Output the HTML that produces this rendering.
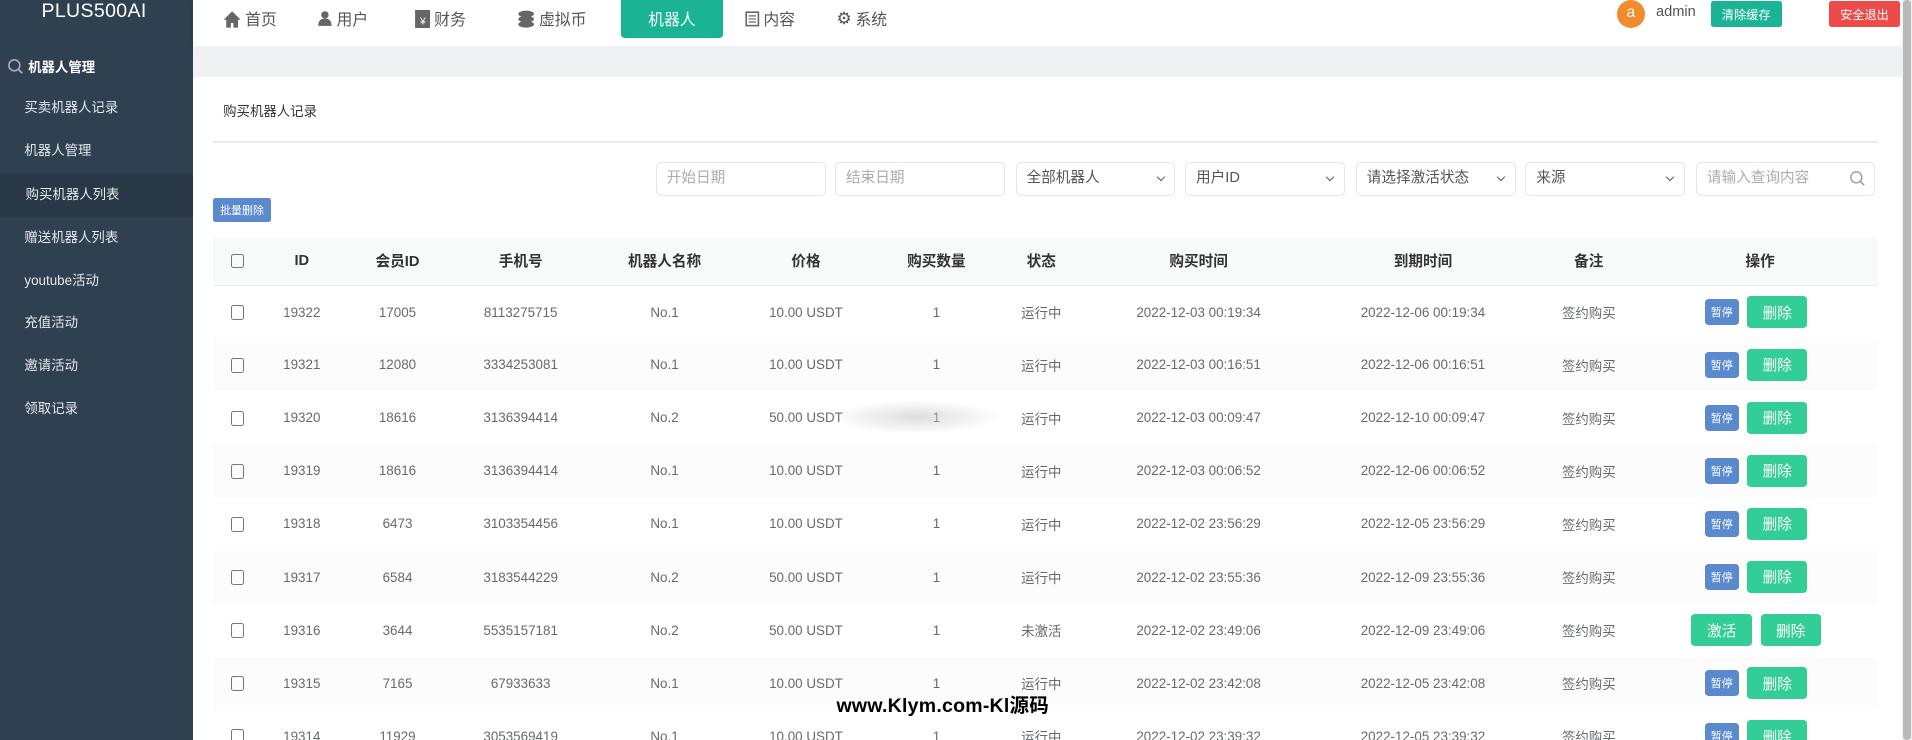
<!DOCTYPE html>
<html><head><meta charset="utf-8">
<style>
html{zoom:1.2194;height:607px;overflow:hidden}
*{margin:0;padding:0;box-sizing:border-box}
body{width:1568px;height:607px;overflow:hidden;background:#fff;font-family:"Liberation Sans","Noto Sans CJK SC",sans-serif;color:#676a6c;position:relative}
.side{position:absolute;left:0;top:0;width:158px;height:607px;background:#2f4050}
.logo{position:absolute;left:34px;top:0px;color:#fff;font-size:16px;letter-spacing:0.3px}
.sh{position:absolute;left:6px;top:46px;color:#fff;font-size:11px;font-weight:bold;display:flex;align-items:center}
.mi{position:absolute;left:0;width:158px;height:35px;line-height:35px;padding-left:20px;color:#e6e8ea;font-size:11px}
.mi.act{background:#293846;padding-left:21px}
.top{position:absolute;left:158px;top:0;width:1402px;height:38px;background:#fff;box-shadow:0 1px 4px rgba(0,0,0,.08)}
.nav{position:absolute;top:0;height:31px;font-size:13px;color:#555;display:flex;align-items:center;gap:3px}
.nav.act{background:#1ab394;color:#fff;width:84px;justify-content:center;border-radius:0 0 3px 3px}
.band{position:absolute;left:158px;top:38px;width:1402px;height:25px;background:#f0f1f5}
.scroll{position:absolute;left:1560px;top:0;width:8px;height:607px;background:#f1f1f1}
.scroll i{position:absolute;left:1px;top:0;width:6px;height:607px;background:#b8b8b8;border-radius:3px}
.inp{position:absolute;top:133px;height:28px;border:1px solid #e5e6e7;border-radius:4px;font-size:12px;line-height:26px;padding-left:8px;color:#555}
.inp.ph{color:#aab}
.inp.sel:after{content:"";position:absolute;right:9px;top:9px;width:4px;height:4px;border-right:1.3px solid #555;border-bottom:1.3px solid #555;transform:rotate(45deg)}
table{position:absolute;left:175px;top:194px;width:1365px;border-collapse:collapse;font-size:11px}
th{height:40px;background:#f8f9f9;color:#333;font-weight:bold;font-size:12px;border-bottom:1px solid #eee}
td{height:43.5px;text-align:center;color:#676a6c}
tr:nth-child(odd) td{background:#fcfcfc}
.cb{display:inline-block;width:11px;height:12px;border:1px solid #777;border-radius:2px;vertical-align:middle}
.ops{display:flex;align-items:center;justify-content:center;padding-right:12px}
.bz{display:inline-flex;align-items:center;justify-content:center;background:#5a89cd;color:#fff;font-size:9px;width:28px;height:21px;border-radius:3px;margin-right:7px}
.bd{display:inline-flex;align-items:center;justify-content:center;background:#33cd96;color:#fff;font-size:12px;width:49px;height:26px;border-radius:3px}
.bj{display:inline-flex;align-items:center;justify-content:center;background:#33cd96;color:#fff;font-size:12px;width:50px;height:26px;border-radius:3px;margin-right:7px}
</style></head><body>
<div class="side">
 <div class="logo">PLUS500AI</div>
 <div class="sh"><svg width="14" height="14" viewBox="0 0 14 14"><circle cx="6" cy="6" r="4.5" fill="none" stroke="#aab" stroke-width="1.3"/><path d="M9.3 9.3L12.5 12.5" stroke="#aab" stroke-width="1.5"/></svg>&nbsp;机器人管理</div>
 <div class="mi" style="top:71px">买卖机器人记录</div>
 <div class="mi" style="top:107px">机器人管理</div>
 <div class="mi act" style="top:143px">购买机器人列表</div>
 <div class="mi" style="top:178px">赠送机器人列表</div>
 <div class="mi" style="top:213px">youtube活动</div>
 <div class="mi" style="top:248px">充值活动</div>
 <div class="mi" style="top:283px">邀请活动</div>
 <div class="mi" style="top:318px">领取记录</div>
</div>
<div class="top"></div>
<div class="nav" style="left:183px"><svg width="15" height="15" viewBox="0 0 14 14"><path d="M7 1L0.5 7.5h2v6h3.5V10h2v3.5h3.5v-6h2z" fill="#666"/></svg>首页</div>
<div class="nav" style="left:260px"><svg width="13" height="14" viewBox="0 0 13 14"><circle cx="6.5" cy="4" r="3" fill="#666"/><path d="M1 13c0-4 2-6 5.5-6s5.5 2 5.5 6z" fill="#666"/></svg>用户</div>
<div class="nav" style="left:340px"><svg width="13" height="15" viewBox="0 0 12 14"><rect x="0" y="0" width="12" height="14" fill="#666"/><text x="6" y="11" font-size="8" fill="#fff" text-anchor="middle">¥</text></svg>财务</div>
<div class="nav" style="left:424px"><svg width="15" height="15" viewBox="0 0 14 14"><ellipse cx="7" cy="3" rx="6" ry="2.5" fill="#666"/><ellipse cx="7" cy="7" rx="6" ry="2.5" fill="#666"/><ellipse cx="7" cy="11" rx="6" ry="2.5" fill="#666"/></svg>虚拟币</div>
<div class="nav act" style="left:509px">机器人</div>
<div class="nav" style="left:611px"><svg width="12" height="13" viewBox="0 0 12 13"><rect x="1" y="1" width="10" height="11" fill="none" stroke="#666" stroke-width="1.3"/><path d="M3 4h6M3 6.5h6M3 9h6" stroke="#666"/></svg>内容</div>
<div class="nav" style="left:686px"><span style="font-size:14px;color:#555">⚙</span>系统</div>
<div style="position:absolute;left:1326px;top:0;width:23px;height:23px;border-radius:50%;background:#f08c2b;color:#fff;font-size:13px;text-align:center;line-height:21px">a</div>
<div style="position:absolute;left:1358px;top:3px;font-size:12px;color:#555">admin</div>
<div style="position:absolute;left:1403px;top:1px;width:58px;height:21px;background:#1ab394;color:#fff;font-size:10px;display:flex;align-items:center;justify-content:center;border-radius:2px">清除缓存</div>
<div style="position:absolute;left:1500px;top:1px;width:58px;height:21px;background:#ed4a4a;color:#fff;font-size:10px;display:flex;align-items:center;justify-content:center;border-radius:2px">安全退出</div>
<div class="band"></div>
<div class="scroll"><i></i></div>
<div style="position:absolute;left:183px;top:82px;font-size:11px;color:#333">购买机器人记录</div>
<div style="position:absolute;left:175px;top:116px;width:1365px;height:1px;background:#ebebeb"></div>
<div class="inp ph" style="left:538px;width:139px">开始日期</div>
<div class="inp ph" style="left:685px;width:139px">结束日期</div>
<div class="inp sel" style="left:833px;width:131px">全部机器人</div>
<div class="inp sel" style="left:972px;width:131px">用户ID</div>
<div class="inp sel" style="left:1112px;width:131px">请选择激活状态</div>
<div class="inp sel" style="left:1251px;width:131px">来源</div>
<div class="inp ph" style="left:1391px;width:147px">请输入查询内容<svg style="position:absolute;right:7px;top:6px" width="14" height="14" viewBox="0 0 14 14"><circle cx="6" cy="6" r="4.5" fill="none" stroke="#999" stroke-width="1.1"/><path d="M9.3 9.3L12.5 12.5" stroke="#999" stroke-width="1.2"/></svg></div>
<div style="position:absolute;left:175px;top:162px;width:47px;height:20px;background:#5a89cd;color:#fff;font-size:9px;display:flex;align-items:center;justify-content:center;border-radius:2px">批量删除</div>
<table>
<colgroup><col style="width:40px"><col style="width:65px"><col style="width:92px"><col style="width:110px"><col style="width:126px"><col style="width:106px"><col style="width:108px"><col style="width:64px"><col style="width:194px"><col style="width:174px"><col style="width:98px"><col style="width:188px"></colgroup>
<tr><th><span class="cb"></span></th><th>ID</th><th>会员ID</th><th>手机号</th><th>机器人名称</th><th>价格</th><th>购买数量</th><th>状态</th><th>购买时间</th><th>到期时间</th><th>备注</th><th style="padding-right:5px">操作</th></tr>
<tr><td><span class="cb"></span></td><td>19322</td><td>17005</td><td>8113275715</td><td>No.1</td><td>10.00 USDT</td><td>1</td><td>运行中</td><td>2022-12-03 00:19:34</td><td>2022-12-06 00:19:34</td><td>签约购买</td><td><div class="ops"><span class="bz">暂停</span><span class="bd">删除</span></div></td></tr>
<tr><td><span class="cb"></span></td><td>19321</td><td>12080</td><td>3334253081</td><td>No.1</td><td>10.00 USDT</td><td>1</td><td>运行中</td><td>2022-12-03 00:16:51</td><td>2022-12-06 00:16:51</td><td>签约购买</td><td><div class="ops"><span class="bz">暂停</span><span class="bd">删除</span></div></td></tr>
<tr><td><span class="cb"></span></td><td>19320</td><td>18616</td><td>3136394414</td><td>No.2</td><td>50.00 USDT</td><td>1</td><td>运行中</td><td>2022-12-03 00:09:47</td><td>2022-12-10 00:09:47</td><td>签约购买</td><td><div class="ops"><span class="bz">暂停</span><span class="bd">删除</span></div></td></tr>
<tr><td><span class="cb"></span></td><td>19319</td><td>18616</td><td>3136394414</td><td>No.1</td><td>10.00 USDT</td><td>1</td><td>运行中</td><td>2022-12-03 00:06:52</td><td>2022-12-06 00:06:52</td><td>签约购买</td><td><div class="ops"><span class="bz">暂停</span><span class="bd">删除</span></div></td></tr>
<tr><td><span class="cb"></span></td><td>19318</td><td>6473</td><td>3103354456</td><td>No.1</td><td>10.00 USDT</td><td>1</td><td>运行中</td><td>2022-12-02 23:56:29</td><td>2022-12-05 23:56:29</td><td>签约购买</td><td><div class="ops"><span class="bz">暂停</span><span class="bd">删除</span></div></td></tr>
<tr><td><span class="cb"></span></td><td>19317</td><td>6584</td><td>3183544229</td><td>No.2</td><td>50.00 USDT</td><td>1</td><td>运行中</td><td>2022-12-02 23:55:36</td><td>2022-12-09 23:55:36</td><td>签约购买</td><td><div class="ops"><span class="bz">暂停</span><span class="bd">删除</span></div></td></tr>
<tr><td><span class="cb"></span></td><td>19316</td><td>3644</td><td>5535157181</td><td>No.2</td><td>50.00 USDT</td><td>1</td><td>未激活</td><td>2022-12-02 23:49:06</td><td>2022-12-09 23:49:06</td><td>签约购买</td><td><div class="ops"><span class="bj">激活</span><span class="bd">删除</span></div></td></tr>
<tr><td><span class="cb"></span></td><td>19315</td><td>7165</td><td>67933633</td><td>No.1</td><td>10.00 USDT</td><td>1</td><td>运行中</td><td>2022-12-02 23:42:08</td><td>2022-12-05 23:42:08</td><td>签约购买</td><td><div class="ops"><span class="bz">暂停</span><span class="bd">删除</span></div></td></tr>
<tr><td><span class="cb"></span></td><td>19314</td><td>11929</td><td>3053569419</td><td>No.1</td><td>10.00 USDT</td><td>1</td><td>运行中</td><td>2022-12-02 23:39:32</td><td>2022-12-05 23:39:32</td><td>签约购买</td><td><div class="ops"><span class="bz">暂停</span><span class="bd">删除</span></div></td></tr>
</table>
<div style="position:absolute;left:680px;top:328px;width:142px;height:28px;background:radial-gradient(ellipse at center,rgba(200,200,200,.6),rgba(255,255,255,0) 70%)"></div>
<div style="position:absolute;left:686px;top:565px;font-size:16px;font-weight:bold;color:#000;letter-spacing:0.2px">www.Klym.com-Kl源码</div>
</body></html>
